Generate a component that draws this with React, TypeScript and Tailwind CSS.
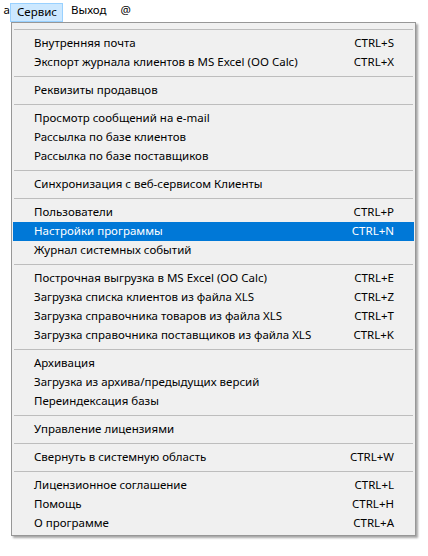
import React from "react";

type Item = { label: string; shortcut?: string; active?: boolean };

const groups: Item[][] = [
  [
    { label: "Внутренняя почта", shortcut: "CTRL+S" },
    { label: "Экспорт журнала клиентов в MS Excel (OO Calc)", shortcut: "CTRL+X" },
  ],
  [{ label: "Реквизиты продавцов" }],
  [
    { label: "Просмотр сообщений на e-mail" },
    { label: "Рассылка по базе клиентов" },
    { label: "Рассылка по базе поставщиков" },
  ],
  [{ label: "Синхронизация с веб-сервисом Клиенты" }],
  [
    { label: "Пользователи", shortcut: "CTRL+P" },
    { label: "Настройки программы", shortcut: "CTRL+N", active: true },
    { label: "Журнал системных событий" },
  ],
  [
    { label: "Построчная выгрузка в MS Excel (OO Calc)", shortcut: "CTRL+E" },
    { label: "Загрузка списка клиентов из файла XLS", shortcut: "CTRL+Z" },
    { label: "Загрузка справочника товаров из файла XLS", shortcut: "CTRL+T" },
    { label: "Загрузка справочника поставщиков из файла XLS", shortcut: "CTRL+K" },
  ],
  [
    { label: "Архивация" },
    { label: "Загрузка из архива/предыдущих версий" },
    { label: "Переиндексация базы" },
  ],
  [{ label: "Управление лицензиями" }],
  [{ label: "Свернуть в системную область", shortcut: "CTRL+W" }],
  [
    { label: "Лицензионное соглашение", shortcut: "CTRL+L" },
    { label: "Помощь", shortcut: "CTRL+H" },
    { label: "О программе", shortcut: "CTRL+A" },
  ],
];

function Sep() {
  return (
    <div className="h-[9px] flex items-center px-[1px]">
      <div className="h-px w-full bg-[#bdbdbd]" />
    </div>
  );
}

function Row({ item }: { item: Item }) {
  return (
    <div
      className={
        item.active
          ? "h-[19px] flex items-center justify-between pl-[21px] pr-[20px] pb-[2px] bg-[#0078d7] text-white"
          : "h-[19px] flex items-center justify-between pl-[21px] pr-[20px] pb-[2px] text-black"
      }
    >
      <span>{item.label}</span>
      {item.shortcut && <span>{item.shortcut}</span>}
    </div>
  );
}

export default function App() {
  return (
    <div
      className="relative w-[428px] h-[556px] bg-white text-[11.5px] leading-none text-black overflow-hidden"
      style={{ fontFamily: '"Noto Sans", "Open Sans", sans-serif' }}
    >
      <div className="flex items-start h-[22px]">
        <div className="h-[22px] flex items-center w-[10px] overflow-hidden justify-end pb-[2px]">
          <span>а</span>
        </div>
        <div className="mt-[3px] h-[19px] flex items-center pl-[6px] pr-[5px] pb-[1px] bg-[#cce8ff] border border-[#99d1ff]">
          Сервис
        </div>
        <div className="h-[22px] flex items-center pl-[8px] pr-[7px] pb-[2px]">Выход</div>
        <div className="h-[22px] flex items-center px-[7px] pb-[2px]">@</div>
      </div>
      <div className="absolute left-[11px] top-[22px] w-[405px] bg-[#f0f0f0] border border-[#979797] pt-[2px] pb-[2px] px-[1px] shadow-[2px_2px_2px_rgba(0,0,0,0.35)]">
        <Sep />
        {groups.map((g, gi) => (
          <React.Fragment key={gi}>
            {gi > 0 && <Sep />}
            {g.map((it, i) => (
              <Row key={i} item={it} />
            ))}
          </React.Fragment>
        ))}
      </div>
    </div>
  );
}
